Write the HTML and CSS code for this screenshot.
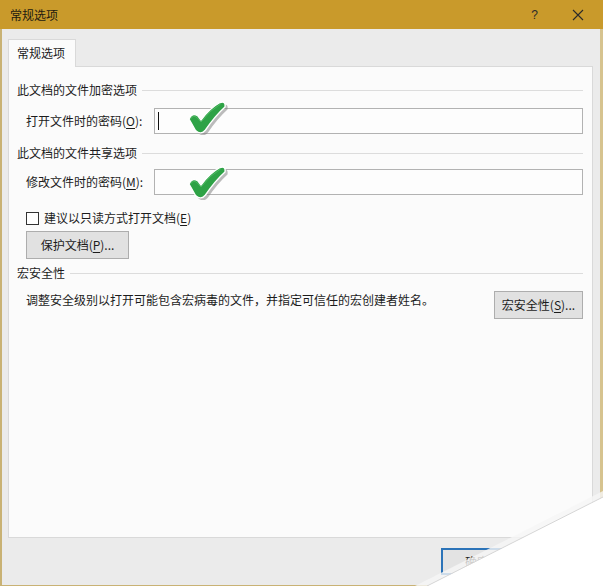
FILE: index.html
```html
<!DOCTYPE html>
<html lang="zh-CN">
<head>
<meta charset="utf-8">
<title>常规选项</title>
<link rel="stylesheet" href="styles.css">
</head>
<body>
<div class="window">
  <div class="titlebar">
    <span class="title">常规选项</span>
    <span class="help">?</span>
    <svg class="close" width="12" height="12" viewBox="0 0 12 12"><path d="M1 1 L11 11 M11 1 L1 11" stroke="#2a2a2a" stroke-width="1.1" fill="none"/></svg>
  </div>
  <div class="frame">
    <div class="tabs"><div class="tab">常规选项</div></div>
    <div class="panel">
      <div class="group-head gh-1"><span>此文档的文件加密选项</span><i class="rule"></i></div>
      <div class="field-row fr-1">
        <label class="field-label">打开文件时的密码(<u>O</u>):</label>
        <div class="input"><span class="caret"></span></div>
        <svg class="check check-1" width="42" height="34" viewBox="0 0 42 34">
          <path d="M3 18 Q6 11 12 15 L15 19 Q24 7 34 1.5 Q40 -0.5 39 6 Q29 15 19.5 29 Q15 34.5 9.5 29.5 Z" fill="#7a7a7a" opacity="0.5" transform="translate(2.5,2.5)"/>
          <path d="M3 18 Q6 11 12 15 L15 19 Q24 7 34 1.5 Q40 -0.5 39 6 Q29 15 19.5 29 Q15 34.5 9.5 29.5 Z" fill="#2ea246" stroke="#ffffff" stroke-width="1.4" stroke-linejoin="round"/>
          <path d="M4.5 18 Q7 13.5 11 16.5 L15 21 Q24 9 34.5 3" fill="none" stroke="#62c874" stroke-width="1" opacity="0.6"/>
        </svg>
      </div>
      <div class="group-head gh-2"><span>此文档的文件共享选项</span><i class="rule"></i></div>
      <div class="field-row fr-2">
        <label class="field-label">修改文件时的密码(<u>M</u>):</label>
        <div class="input"></div>
        <svg class="check check-2" width="42" height="34" viewBox="0 0 42 34">
          <path d="M3 18 Q6 11 12 15 L15 19 Q24 7 34 1.5 Q40 -0.5 39 6 Q29 15 19.5 29 Q15 34.5 9.5 29.5 Z" fill="#7a7a7a" opacity="0.5" transform="translate(2.5,2.5)"/>
          <path d="M3 18 Q6 11 12 15 L15 19 Q24 7 34 1.5 Q40 -0.5 39 6 Q29 15 19.5 29 Q15 34.5 9.5 29.5 Z" fill="#2ea246" stroke="#ffffff" stroke-width="1.4" stroke-linejoin="round"/>
          <path d="M4.5 18 Q7 13.5 11 16.5 L15 21 Q24 9 34.5 3" fill="none" stroke="#62c874" stroke-width="1" opacity="0.6"/>
        </svg>
      </div>
      <div class="check-row">
        <span class="checkbox"></span>
        <span>建议以只读方式打开文档(<u>E</u>)</span>
      </div>
      <div class="btn-row">
        <button class="btn btn-protect">保护文档(<u>P</u>)...</button>
      </div>
      <div class="group-head gh-3"><span>宏安全性</span><i class="rule"></i></div>
      <div class="macro-row">
        <span class="macro-text">调整安全级别以打开可能包含宏病毒的文件，并指定可信任的宏创建者姓名。</span>
        <button class="btn btn-macro">宏安全性(<u>S</u>)...</button>
      </div>
    </div>
    <div class="footer">
      <button class="btn btn-dlg btn-primary">确定</button>
      <button class="btn btn-dlg">取消</button>
    </div>
  </div>
  <svg class="curl" width="603" height="586" viewBox="0 0 603 586">
    <polygon points="415,586 603,491 603,497 427,586" fill="#f6f6f6" opacity="0.8"/>
    <polygon points="427,586 603,497 603,586" fill="#ffffff"/>
    <line x1="427" y1="586" x2="603" y2="497" stroke="#d6d6d6" stroke-width="1"/>
  </svg>
</div>
</body>
</html>
```

FILE: styles.css
```css
* {
  box-sizing: border-box;
}

html,
body {
  margin: 0;
  padding: 0;
}

body {
  font-family: "Noto Sans CJK SC", "Microsoft YaHei", "Liberation Sans", sans-serif;
  font-size: 12px;
  line-height: 16px;
  color: #1c1c1c;
  background: #ffffff;
}

u {
  text-decoration: underline;
  text-underline-offset: 2px;
}

.window {
  position: relative;
  width: 603px;
  height: 586px;
  overflow: hidden;
  display: flex;
  flex-direction: column;
  background: #ebebeb;
}

.titlebar {
  height: 29px;
  flex: none;
  display: flex;
  align-items: center;
  background: #c99a2b;
  padding: 0 19px 0 10px;
}

.title {
  flex: 1;
  color: #1e1a10;
}

.help {
  font-family: "Liberation Sans", sans-serif;
  font-size: 12px;
  color: #2a2a2a;
  margin-right: 34px;
}

.close {
  display: block;
}

.frame {
  flex: 1;
  display: flex;
  flex-direction: column;
  border-left: 2px solid #c9b274;
  border-right: 3px solid #d6c38f;
  border-bottom: 1px solid #c9b274;
  padding: 10px 7px 0 6px;
  background: #ebebeb;
}

.tabs {
  display: flex;
  height: 27px;
  flex: none;
}

.tab {
  position: relative;
  z-index: 1;
  width: 68px;
  height: 28px;
  background: #fbfbfb;
  border: 1px solid #d9d9d9;
  border-bottom: none;
  padding-left: 8px;
  line-height: 26px;
}

.panel {
  height: 472px;
  flex: none;
  background: #fbfbfb;
  border: 1px solid #d9d9d9;
  padding: 0 9px 0 8px;
}

.group-head {
  display: flex;
  align-items: center;
  height: 16px;
}

.group-head .rule {
  flex: 1;
  height: 1px;
  background: #dcdcdc;
  margin-left: 5px;
}

.gh-1 {
  margin-top: 15px;
}

.gh-2 {
  margin-top: 11px;
}

.gh-3 {
  margin-top: 6px;
}

.field-row {
  position: relative;
  display: flex;
  align-items: center;
  height: 26px;
  padding-left: 9px;
}

.fr-1 {
  margin-top: 10px;
}

.fr-2 {
  margin-top: 8px;
}

.field-label {
  width: 128px;
  flex: none;
}

.input {
  flex: 1;
  height: 26px;
  background: #fdfdfd;
  border: 1px solid #b2b2b2;
  position: relative;
}

.caret {
  position: absolute;
  left: 3px;
  top: 3px;
  width: 1px;
  height: 18px;
  background: #111111;
}

.check {
  position: absolute;
  left: 169px;
  pointer-events: none;
}

.check-1 {
  top: -7px;
}

.check-2 {
  top: -3px;
}

.check-row {
  display: flex;
  align-items: center;
  height: 16px;
  margin-top: 15px;
  padding-left: 9px;
}

.checkbox {
  width: 13px;
  height: 13px;
  border: 1px solid #333333;
  background: #ffffff;
  margin-right: 5px;
  flex: none;
}

.btn-row {
  display: flex;
  margin-top: 5px;
  padding-left: 9px;
}

.btn {
  font-family: inherit;
  font-size: 12px;
  line-height: 16px;
  color: #1c1c1c;
  background: #e1e1e1;
  border: 1px solid #adadad;
  padding: 0;
  margin: 0;
}

.btn-protect {
  width: 103px;
  height: 28px;
}

.macro-row {
  display: flex;
  align-items: center;
  justify-content: space-between;
  margin-top: 10px;
  padding-left: 9px;
}

.macro-text {
  margin-top: -10px;
}

.btn-macro {
  width: 89px;
  height: 28px;
}

.footer {
  flex: 1;
  display: flex;
  justify-content: flex-end;
  align-items: flex-start;
  gap: 6px;
  padding-top: 10px;
  padding-right: 2px;
}

.btn-dlg {
  width: 72px;
  height: 27px;
}

.btn-primary {
  border: 2px solid #2b73b8;
  background: #e3e3e3;
}

.curl {
  position: absolute;
  left: 0;
  top: 0;
  pointer-events: none;
}
```
